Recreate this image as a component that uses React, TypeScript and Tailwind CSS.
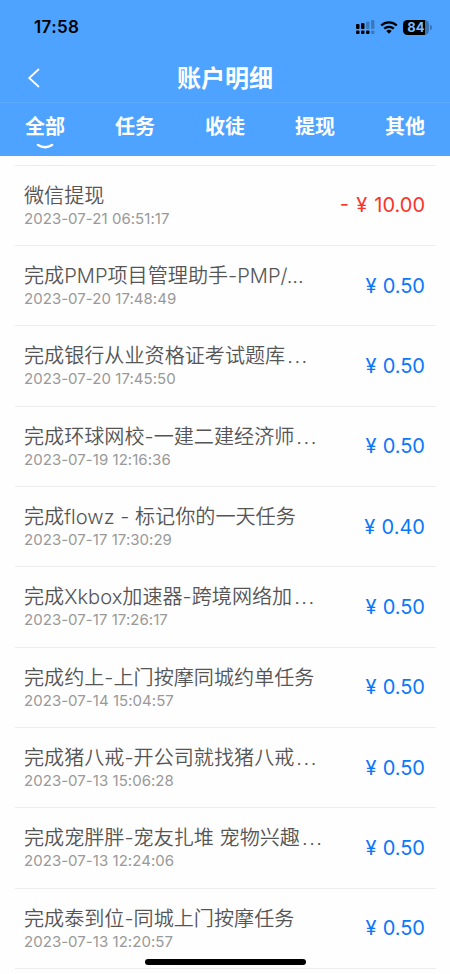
const tabs = ["全部", "任务", "收徒", "提现", "其他"];

const records = [
    { title: "微信提现", time: "2023-07-21 06:51:17", amount: "10.00", out: true },
    { title: "完成PMP项目管理助手-PMP/...", time: "2023-07-20 17:48:49", amount: "0.50" },
    { title: "完成银行从业资格证考试题库", time: "2023-07-20 17:45:50", amount: "0.50", more: true },
    { title: "完成环球网校-一建二建经济师", time: "2023-07-19 12:16:36", amount: "0.50", more: true },
    { title: "完成flowz - 标记你的一天任务", time: "2023-07-17 17:30:29", amount: "0.40" },
    { title: "完成Xkbox加速器-跨境网络加", time: "2023-07-17 17:26:17", amount: "0.50", more: true },
    { title: "完成约上-上门按摩同城约单任务", time: "2023-07-14 15:04:57", amount: "0.50" },
    { title: "完成猪八戒-开公司就找猪八戒", time: "2023-07-13 15:06:28", amount: "0.50", more: true },
    { title: "完成宠胖胖-宠友扎堆 宠物兴趣", time: "2023-07-13 12:24:06", amount: "0.50", more: true },
    { title: "完成泰到位-同城上门按摩任务", time: "2023-07-13 12:20:57", amount: "0.50" },
];

const StatusBar = () => {
    return (
        <div className="flex h-[54px] items-center justify-between pl-[34px] pr-[18px]">
            <span className="text-[17px] leading-5 font-semibold tracking-[0.4px] text-black">17:58</span>
            <div className="flex items-center">
                {/* Dual sim signal */}
                <svg width="19" height="14" viewBox="0 0 19 14">
                    <rect x="0" y="4" width="3.5" height="5" rx="1" />
                    <rect x="5" y="3" width="3.5" height="6" rx="1" />
                    <rect x="10" y="1.5" width="3.5" height="7.5" rx="1" fillOpacity="0.25" />
                    <rect x="15" y="0" width="3.5" height="9" rx="1" fillOpacity="0.25" />
                    <rect x="0" y="10.5" width="3.5" height="3.5" rx="1" />
                    <rect x="5" y="10.5" width="3.5" height="3.5" rx="1" />
                    <rect x="10" y="10.5" width="3.5" height="3.5" rx="1" />
                    <rect x="15" y="10.5" width="3.5" height="3.5" rx="1" fillOpacity="0.25" />
                </svg>
                <svg className="ml-[5px]" width="18" height="13" viewBox="0 0 18 13">
                    <path d="M1.2 4.5a11.3 11.3 0 0 1 15.6 0" fill="none" stroke="black" strokeWidth="2.3" />
                    <path d="M4.2 7.7a7 7 0 0 1 9.6 0" fill="none" stroke="black" strokeWidth="2.3" />
                    <path d="M9 12.8 6.3 10.1a3.9 3.9 0 0 1 5.4 0Z" />
                </svg>
                <div className="ml-[5px] flex h-[15px] w-[26px] items-center justify-center rounded-[4.5px] bg-[linear-gradient(to_right,#000_22px,#3874b5_22px)] text-[13px] leading-none font-bold text-[#7dbcff]">
                    84
                </div>
                <div className="ml-px h-[5px] w-[2px] rounded-r-full bg-[#3874b5]" />
            </div>
        </div>
    );
};

export default function App() {
    return (
        <div className="relative h-[974px] w-[450px] overflow-hidden bg-[#fefefe] font-['Inter','Noto_Sans_CJK_SC',sans-serif]">
            <header className="h-[155.5px] bg-[#4da3ff] text-white">
                <StatusBar />
                <div className="grid h-[49px] grid-cols-[1fr_auto_1fr] items-center border-b border-[#5dabff]">
                    <svg className="ml-[27px]" width="14" height="20" viewBox="0 0 14 20" fill="none" stroke="white" strokeWidth="1.8">
                        <path d="M12 1 2.2 10 12 19" />
                    </svg>
                    <h1 className="pt-px text-2xl leading-8 font-bold">账户明细</h1>
                </div>
                <nav className="grid grid-cols-5">
                    {tabs.map((tab, index) => (
                        <div key={tab} className="flex flex-col items-center pt-[8px]">
                            <span className="text-xl leading-8 font-bold">{tab}</span>
                            {index === 0 && (
                                <svg width="18" height="7" viewBox="0 0 18 7" fill="none">
                                    <path d="M2 2Q9 6.5 16 2" stroke="white" strokeWidth="2.6" strokeLinecap="round" />
                                </svg>
                            )}
                        </div>
                    ))}
                </nav>
            </header>

            <ul className="mx-[15px] mt-[9px] w-[421px] border-t border-[#ededed]">
                {records.map((item) => (
                    <li
                        key={item.time}
                        className="flex h-[80.35px] items-center justify-between border-b border-[#ededed] pr-[11px] pl-[9px]"
                    >
                        <div className="pt-px whitespace-nowrap">
                            <p className="text-[20.1px] leading-[26px] font-[350] text-[#555]">
                                {item.title}
                                {item.more && <span className="ml-[2px] tracking-[1.5px]">...</span>}
                            </p>
                            <p className="text-[15px] leading-[20px] tracking-[0.04px] text-[#999]">{item.time}</p>
                        </div>
                        <span
                            className={`text-xl ${item.out ? "text-[#fb342b] [word-spacing:1.5px]" : "text-[#0a78fa] [word-spacing:0.6px]"}`}
                        >
                            {item.out && "- "}¥ {item.amount}
                        </span>
                    </li>
                ))}
            </ul>

            {/* Home indicator */}
            <div className="absolute bottom-[9px] left-[145px] h-[6px] w-[161px] rounded-full bg-black" />
        </div>
    );
}
